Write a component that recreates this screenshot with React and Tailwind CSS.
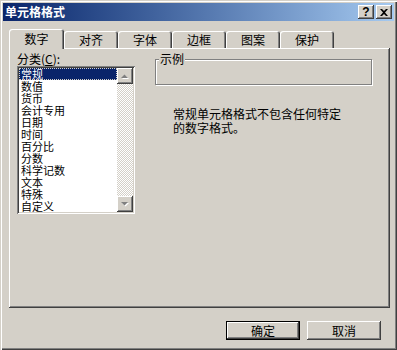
import React from 'react';

const categories = ['常规', '数值', '货币', '会计专用', '日期', '时间', '百分比', '分数', '科学记数', '文本', '特殊', '自定义'];
const tabs = ['数字', '对齐', '字体', '边框', '图案', '保护'];

const raised = 'shadow-[inset_-1px_-1px_#404040,inset_1px_1px_#fff,inset_-2px_-2px_#808080]';
const sunken = 'shadow-[inset_1px_1px_#808080,inset_-1px_-1px_#fff,inset_2px_2px_#404040,inset_-2px_-2px_#d4d0c8]';

const ScrollButton = ({ down }) => (
  <div className={`w-[16px] h-[16px] bg-[#d4d0c8] flex items-center justify-center ${raised}`}>
    <svg width="8" height="5" viewBox="0 0 8 5">
      {down ? (
        <>
          <path d="M1 1h7l-3.5 3.5z" fill="#fff" />
          <path d="M0 0h7l-3.5 3.5z" fill="#808080" />
        </>
      ) : (
        <>
          <path d="M1 5h7l-3.5-3.5z" fill="#fff" />
          <path d="M0 4h7l-3.5-3.5z" fill="#808080" />
        </>
      )}
    </svg>
  </div>
);

const Tab = ({ label, active }) => (
  <div
    className={`flex items-center justify-center rounded-t-[3px] bg-[#d4d0c8] ${
      active
        ? 'relative z-10 w-[55px] h-[20px] -mb-px pb-[2px] shadow-[inset_1px_1px_#fff,inset_-1px_0_#404040,inset_-2px_0_#808080]'
        : 'w-[54px] h-[17px] shadow-[inset_1px_1px_#fff,inset_-1px_0_#404040,inset_-2px_0_#808080]'
    }`}
  >
    {label}
  </div>
);

export default function App() {
  return (
    <div
      className="w-[397px] h-[350px] bg-[#d4d0c8] text-black text-[12px] leading-[13px] flex flex-col p-[3px] shadow-[inset_1px_1px_#d4d0c8,inset_2px_2px_#fff,inset_-1px_-1px_#404040,inset_-2px_-2px_#808080]"
      style={{ fontFamily: '"Noto Sans CJK SC", "Noto Sans", sans-serif' }}
    >
      {/* title bar */}
      <div className="h-[18px] flex items-center bg-gradient-to-r from-[#0a246a] to-[#a6caf0] pl-[2px] pr-[2px]">
        <span className="flex-1 text-white font-bold text-[12px] leading-[14px]">单元格格式</span>
        <div className="flex gap-[2px]">
          <div className={`w-[16px] h-[14px] bg-[#d4d0c8] flex items-center justify-center font-bold text-[12px] leading-[12px] ${raised}`}
            style={{ fontFamily: '"Liberation Sans", sans-serif' }}>
            ?
          </div>
          <div className={`w-[16px] h-[14px] bg-[#d4d0c8] flex items-center justify-center ${raised}`}>
            <svg width="8" height="7" viewBox="0 0 8 7">
              <path d="M0 0h2l2 2 2-2h2L5 3.5 8 7H6L4 5 2 7H0l3-3.5z" fill="#000" />
            </svg>
          </div>
        </div>
      </div>

      <div className="flex flex-col pl-[6px] pr-[5px] pt-[8px]">
        {/* tabs */}
        <div className="flex items-end h-[19px]">
          {tabs.map((t, i) => (
            <Tab key={t} label={t} active={i === 0} />
          ))}
        </div>

        {/* panel */}
        <div className={`relative w-[381px] h-[260px] flex ${raised}`}>
          <div className="ml-[8px] mt-[4px] flex flex-col w-[118px]">
            <div className="h-[14px]">
              分类(<span className="underline">C</span>):
            </div>
            <div className={`h-[148px] bg-white flex p-[2px] ${sunken}`}>
              <div className="flex-1 flex flex-col">
                {categories.map((c, i) => (
                  <div
                    key={c}
                    className={`h-[12px] text-[11px] leading-[12px] shrink-0 pl-[2px] whitespace-nowrap ${
                      i === 0 ? 'bg-[#0a246a] text-white outline-1 outline-dotted outline-[#d4d0c8] -outline-offset-1' : ''
                    }`}
                  >
                    {c}
                  </div>
                ))}
              </div>
              <div className="w-[16px] flex flex-col">
                <ScrollButton />
                <div className="flex-1 bg-[repeating-conic-gradient(#fff_0_25%,#d4d0c8_0_50%)] bg-[length:2px_2px]" />
                <ScrollButton down />
              </div>
            </div>
          </div>

          <div className="ml-[20px] mt-[11px] flex flex-col">
            <div className="relative w-[217px] h-[26px] border border-[#808080] shadow-[1px_1px_#fff,inset_1px_1px_#fff]">
              <span className="absolute -top-[8px] left-[3px] px-[1px] bg-[#d4d0c8] leading-[13px]">示例</span>
            </div>
            <div className="ml-[18px] mt-[22px] w-[170px] leading-[14px]">
              常规单元格格式不包含任何特定的数字格式。
            </div>
          </div>
        </div>

        {/* buttons */}
        <div className="flex justify-end gap-[7px] mt-[13px] pr-[8px]">
          <div className="w-[74px] h-[19px] border border-black bg-[#d4d0c8] flex items-center justify-center shadow-[inset_-1px_-1px_#404040,inset_1px_1px_#fff,inset_-2px_-2px_#808080]">
            确定
          </div>
          <div className={`w-[74px] h-[19px] bg-[#d4d0c8] flex items-center justify-center ${raised}`}>
            取消
          </div>
        </div>
      </div>
    </div>
  );
}
